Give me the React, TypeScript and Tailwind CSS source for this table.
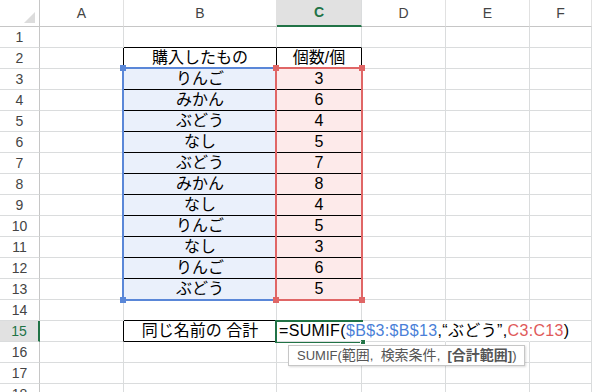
import React from 'react';

const cols = ['A', 'B', 'C', 'D', 'E', 'F'];
const items = ['りんご', 'みかん', 'ぶどう', 'なし', 'ぶどう', 'みかん', 'なし', 'りんご', 'なし', 'りんご', 'ぶどう'];
const counts = [3, 6, 4, 5, 7, 8, 4, 5, 3, 6, 5];
const rows = Array.from({ length: 18 }, (_, i) => i + 1);

const font = "font-['Liberation_Sans','Noto_Sans_CJK_JP',sans-serif]";

// 罫線の色 (右/下) をセルごとに決める
const rightClass = (r: number, c: number) => {
  if (r === 2 && c <= 2) return 'border-r-black';
  if (r === 15 && c <= 1) return 'border-r-black';
  if (r === 15 && c >= 2 && c <= 4) return 'border-r-transparent';
  return 'border-r-[#dadcdd]';
};

const bottomClass = (r: number, c: number) => {
  if (r === 1 && (c === 1 || c === 2)) return 'border-b-black';
  if (r >= 3 && r <= 12 && (c === 1 || c === 2)) return 'border-b-black';
  if ((r === 14 || r === 15) && c === 1) return 'border-b-black';
  return 'border-b-[#dadcdd]';
};

const bgClass = (r: number, c: number) => {
  if (r >= 3 && r <= 13 && c === 1) return 'bg-[#eaf0fb]';
  if (r >= 3 && r <= 13 && c === 2) return 'bg-[#fdeaea]';
  return 'bg-white';
};

const cellText = (r: number, c: number): React.ReactNode => {
  if (r === 2 && c === 1) return '購入したもの';
  if (r === 2 && c === 2) return '個数/個';
  if (r >= 3 && r <= 13 && c === 1) return items[r - 3];
  if (r >= 3 && r <= 13 && c === 2) return counts[r - 3];
  if (r === 15 && c === 1) return '同じ名前の 合計';
  return null;
};

// 範囲の四隅のハンドル
const Corners = ({ color, skipLeft }: { color: string; skipLeft?: boolean }) => (
  <>
    {!skipLeft && <div className={`absolute -left-[4px] -top-[4px] w-[6px] h-[6px] ${color}`} />}
    {!skipLeft && <div className={`absolute -left-[4px] -bottom-[4px] w-[6px] h-[6px] ${color}`} />}
    <div className={`absolute -right-[4px] -top-[4px] w-[6px] h-[6px] ${color}`} />
    <div className={`absolute -right-[4px] -bottom-[4px] w-[6px] h-[6px] ${color}`} />
  </>
);

export default function App() {
  return (
    <div className={`relative w-[592px] h-[392px] overflow-hidden bg-white ${font}`}>
      <div className="grid grid-cols-[40px_84px_153px_85px_84px_84px_62px] grid-rows-[27px_repeat(18,21px)]">
        {/* 左上の角 */}
        <div className="border-r border-b border-r-[#c6c6c6] border-b-[#c6c6c6] bg-white">
          <svg width="39" height="26" viewBox="0 0 39 26">
            <polygon points="35,12 35,23 24,23" fill="#dcdcdc" />
          </svg>
        </div>
        {cols.map(col =>
          col === 'C' ? (
            <div key={col} className="flex items-center justify-center bg-[#e1e1e1] border-r border-r-[#dadcdd] border-b-2 border-b-[#217346] text-[14px] font-bold text-[#217346]">
              {col}
            </div>
          ) : (
            <div key={col} className="flex items-center justify-center bg-white border-r border-r-[#e1e1e1] border-b border-b-[#c6c6c6] text-[14px] text-[#444]">
              {col}
            </div>
          )
        )}

        {rows.map(r => (
          <React.Fragment key={r}>
            {r === 15 ? (
              <div className="flex items-center justify-center bg-[#e1e1e1] border-r-2 border-r-[#217346] border-b border-b-[#dadcdd] text-[14px] text-[#217346]">
                {r}
              </div>
            ) : (
              <div className="flex items-center justify-center bg-white border-r border-r-[#c6c6c6] border-b border-b-[#dadcdd] text-[14px] text-[#444]">
                {r}
              </div>
            )}
            {cols.map((col, c) =>
              r === 15 && c === 2 ? (
                <div key={col} className={`relative z-20 flex items-center pl-[2px] border-r border-b ${rightClass(r, c)} ${bottomClass(r, c)}`}>
                  <span className="whitespace-pre text-[16px] leading-none tracking-[0.35px] text-black">
                    =SUMIF(<span className="text-[#4a7fd8]">$B$3:$B$13</span>,“ぶどう”,<span className="text-[#e05a5a]">C3:C13</span>)
                  </span>
                </div>
              ) : (
                <div
                  key={col}
                  className={`flex items-center justify-center border-r border-b text-[16px] leading-none text-black whitespace-pre ${rightClass(r, c)} ${bottomClass(r, c)} ${bgClass(r, c)}`}
                >
                  {cellText(r, c)}
                </div>
              )
            )}
          </React.Fragment>
        ))}
      </div>

      {/* 数式の参照範囲 */}
      <div className="absolute left-[122px] top-[67px] w-[155px] h-[234px] border-2 border-[#5a87d8]">
        <Corners color="bg-[#5a87d8]" />
      </div>
      <div className="absolute left-[275px] top-[67px] w-[88px] h-[234px] border-2 border-[#e06666]">
        <Corners color="bg-[#e06666]" />
      </div>

      {/* アクティブセル */}
      <div className="absolute z-10 left-[275px] top-[320px] w-[88px] h-[23px] border-2 border-r-0 border-[#217346]">
        <div className="absolute -right-[3px] -bottom-[4px] w-[6px] h-[6px] bg-[#217346] border border-white" />
      </div>

      {/* 関数のヒント */}
      <div className="absolute z-30 left-[288px] top-[345px] h-[21px] flex items-center pl-[8px] pr-[7px] bg-white border border-[#c6c6c6] shadow-[1px_1px_2px_rgba(0,0,0,0.15)] text-[13px] text-[#555]">
        <span className="whitespace-pre">
          SUMIF(<span className="text-[14px]">範囲</span>,  <span className="text-[14px]">検索条件</span>,  <span className="font-bold">[<span className="text-[14px]">合計範囲</span>]</span>)
        </span>
      </div>
    </div>
  );
}
